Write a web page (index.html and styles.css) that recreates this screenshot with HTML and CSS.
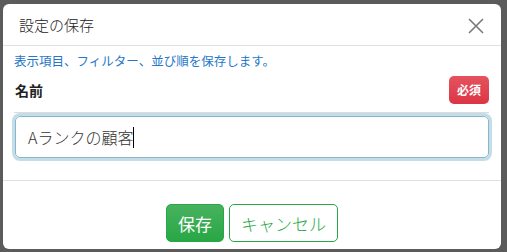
FILE: index.html
```html
<!DOCTYPE html>
<html>

<head>
    <title>設定の保存</title>
    <link rel="stylesheet" href="styles.css">
</head>

<body>
    <div class="modal">
        <div class="modal-header">
            <span class="modal-title">設定の保存</span>
            <span class="close">
                <svg width="16" height="16" viewBox="0 0 16 16">
                    <path d="M1 1 L15 15 M15 1 L1 15" stroke="#7a7a7a" stroke-width="1.6" fill="none" />
                </svg>
            </span>
        </div>
        <div class="modal-body">
            <p class="note">表示項目、フィルター、並び順を保存します。</p>
            <div class="label-row">
                <span class="label">名前</span>
                <span class="badge">必須</span>
            </div>
            <div class="input-box">
                <span class="input-text">Aランクの顧客</span><span class="caret"></span>
            </div>
        </div>
        <div class="modal-footer">
            <button class="btn btn-save">保存</button>
            <button class="btn btn-cancel">キャンセル</button>
        </div>
    </div>
</body>

</html>
```

FILE: styles.css
```css
body {
    margin: 0;
    background-color: #5b5b5b;
    font-family: "Noto Sans CJK JP", "Noto Sans", sans-serif;
    width: 507px;
    height: 252px;
    overflow: hidden;
}

.modal {
    margin: 4px 0 0 3px;
    width: 498px;
    height: 245px;
    background-color: #fff;
    border-radius: 6px;
    display: flex;
    flex-direction: column;
}

.modal-header {
    height: 41px;
    border-bottom: 1px solid #e0e0e0;
    display: flex;
    align-items: center;
    justify-content: space-between;
    padding: 0 17px 0 16px;
}

.modal-title {
    font-size: 15px;
    font-weight: 300;
    color: #222;
}

.close {
    display: flex;
    margin-top: 2px;
}

.modal-body {
    padding: 6px 12px 0 11px;
    height: 128px;
    border-bottom: 1px solid #e0e0e0;
}

.note {
    margin: 0;
    font-size: 12.5px;
    line-height: 18px;
    color: #2677c9;
}

.label-row {
    display: flex;
    justify-content: space-between;
    align-items: center;
    margin-top: 6px;
    height: 28px;
    padding-bottom: 8px;
    border-bottom: 1px solid #dcdcdc;
}

.label {
    font-size: 14px;
    font-weight: bold;
    color: #222;
    margin-left: 1px;
}

.badge {
    width: 40px;
    height: 28px;
    line-height: 28px;
    text-align: center;
    border-radius: 5px;
    background: linear-gradient(#e4535f, #dc3545);
    color: #fff;
    font-size: 12px;
    font-weight: bold;
}

.input-box {
    margin-top: 3px;
    margin-left: 1px;
    height: 40px;
    border: 1px solid #86b7cc;
    border-radius: 5px;
    box-shadow: 0 0 0 3px #c5dde8;
    display: flex;
    align-items: center;
    padding-left: 12px;
}

.input-text {
    font-size: 16px;
    font-weight: 300;
    color: #333;
}

.caret {
    width: 1px;
    height: 21px;
    background-color: #000;
}

.modal-footer {
    display: flex;
    justify-content: center;
    gap: 5px;
    padding-top: 23px;
}

.btn {
    height: 38px;
    border-radius: 5px;
    font-family: "Noto Sans CJK JP", "Noto Sans", sans-serif;
    font-size: 17px;
    padding: 0 11px;
    cursor: pointer;
}

.btn-save {
    background: linear-gradient(#47b25f, #28a745);
    border: 1px solid #28a745;
    color: #fff;
}

.btn-cancel {
    background-color: #fff;
    border: 1px solid #28a745;
    color: #28a745;
    font-weight: 300;
}
```
